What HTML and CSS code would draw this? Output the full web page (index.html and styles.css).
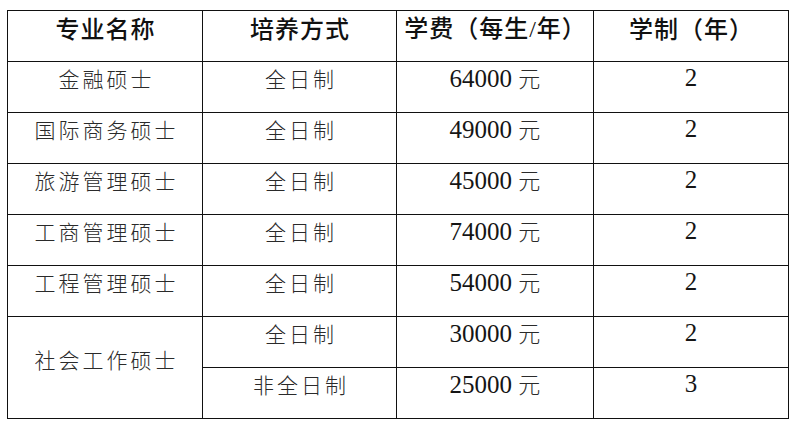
FILE: index.html
```html
<!DOCTYPE html>
<html lang="zh-CN">
<head>
<meta charset="utf-8">
<title>学费</title>
<link rel="stylesheet" href="styles.css">
</head>
<body>
<div class="wrap">
<table class="fees">
  <colgroup>
    <col class="c1"><col class="c2"><col class="c3"><col class="c4">
  </colgroup>
  <thead>
    <tr>
      <th>专业名称</th>
      <th>培养方式</th>
      <th>学费（每生<span class="lat">/</span>年）</th>
      <th>学制（年）</th>
    </tr>
  </thead>
  <tbody>
    <tr><td class="zh">金融硕士</td><td class="zh">全日制</td><td class="num">64000 <span class="zh-unit">元</span></td><td class="num">2</td></tr>
    <tr><td class="zh">国际商务硕士</td><td class="zh">全日制</td><td class="num">49000 <span class="zh-unit">元</span></td><td class="num">2</td></tr>
    <tr><td class="zh">旅游管理硕士</td><td class="zh">全日制</td><td class="num">45000 <span class="zh-unit">元</span></td><td class="num">2</td></tr>
    <tr><td class="zh">工商管理硕士</td><td class="zh">全日制</td><td class="num">74000 <span class="zh-unit">元</span></td><td class="num">2</td></tr>
    <tr><td class="zh">工程管理硕士</td><td class="zh">全日制</td><td class="num">54000 <span class="zh-unit">元</span></td><td class="num">2</td></tr>
    <tr><td class="zh" rowspan="2">社会工作硕士</td><td class="zh">全日制</td><td class="num">30000 <span class="zh-unit">元</span></td><td class="num">2</td></tr>
    <tr><td class="zh">非全日制</td><td class="num">25000 <span class="zh-unit">元</span></td><td class="num">3</td></tr>
  </tbody>
</table>
</div>
</body>
</html>
```

FILE: styles.css
```css
html, body {
  margin: 0;
  padding: 0;
  background: #ffffff;
}

.wrap {
  padding: 10px 0 0 7px;
}

.fees {
  border-collapse: collapse;
  table-layout: fixed;
  width: 781px;
  color: #1a1a1a;
}

.c1 { width: 195px; }
.c2 { width: 194px; }
.c3 { width: 197px; }
.c4 { width: 195px; }

.fees th,
.fees td {
  border: 1px solid #111;
  height: 51px;
  padding: 0 0 18px 0;
  box-sizing: border-box;
  text-align: center;
  vertical-align: middle;
  line-height: 24px;
}

.fees th {
  font-family: "Noto Sans CJK SC", sans-serif;
  font-weight: 500;
  font-size: 24px;
  letter-spacing: 1px;
  padding-left: 1px;
  padding-bottom: 16px;
  color: #111;
}

.fees th .lat {
  font-family: "Liberation Serif", serif;
  font-weight: 400;
}

.fees td.zh {
  font-family: "Noto Sans CJK SC", sans-serif;
  font-weight: 300;
  font-size: 21px;
  letter-spacing: 3px;
  padding-left: 3px;
  color: #2a2a2a;
}

.fees td.num {
  font-family: "Liberation Serif", serif;
  font-size: 25px;
  color: #151515;
}

.zh-unit {
  font-family: "Noto Sans CJK SC", sans-serif;
  font-weight: 300;
  font-size: 22px;
  color: #2a2a2a;
}
```
